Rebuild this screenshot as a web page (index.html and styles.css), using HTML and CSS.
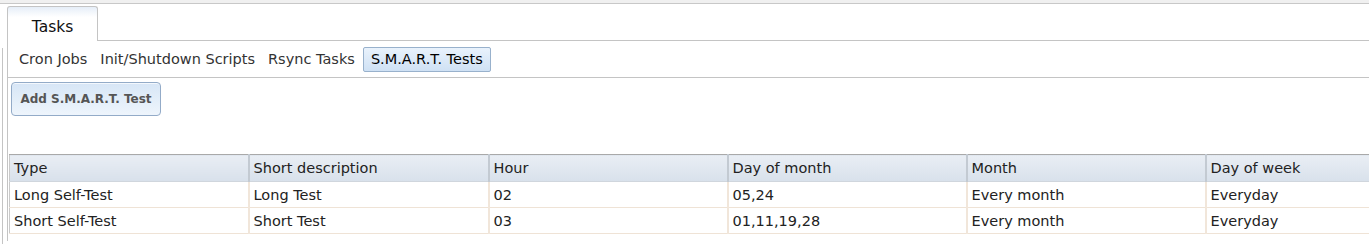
FILE: index.html
```html
<!DOCTYPE html>
<html lang="en">
<head>
    <meta charset="UTF-8">
    <title>Tasks</title>
    <link rel="stylesheet" href="styles.css">
</head>
<body>
    <div class="topbar"></div>
    <div class="frame">
        <div class="rail"></div>
        <div class="main">
            <div class="tabbar">
                <div class="tab">Tasks</div>
            </div>
            <div class="panel">
                <div class="subtabs">
                    <span class="subtab">Cron Jobs</span>
                    <span class="subtab">Init/Shutdown Scripts</span>
                    <span class="subtab">Rsync Tasks</span>
                    <span class="subtab active">S.M.A.R.T. Tests</span>
                </div>
                <div class="toolbar">
                    <button class="add-btn">Add S.M.A.R.T. Test</button>
                </div>
                <div class="grid-wrap">
                    <table class="grid">
                        <colgroup>
                            <col class="c1"><col class="c2"><col class="c3"><col class="c4"><col class="c5"><col>
                        </colgroup>
                        <thead>
                            <tr>
                                <th>Type</th>
                                <th>Short description</th>
                                <th>Hour</th>
                                <th>Day of month</th>
                                <th>Month</th>
                                <th>Day of week</th>
                            </tr>
                        </thead>
                        <tbody>
                            <tr>
                                <td>Long Self-Test</td>
                                <td>Long Test</td>
                                <td>02</td>
                                <td>05,24</td>
                                <td>Every month</td>
                                <td>Everyday</td>
                            </tr>
                            <tr>
                                <td>Short Self-Test</td>
                                <td>Short Test</td>
                                <td>03</td>
                                <td>01,11,19,28</td>
                                <td>Every month</td>
                                <td>Everyday</td>
                            </tr>
                        </tbody>
                    </table>
                </div>
            </div>
        </div>
    </div>
</body>
</html>
```

FILE: styles.css
```css
* {
    margin: 0;
    padding: 0;
    box-sizing: border-box;
}

body {
    font-family: 'DejaVu Sans', Verdana, sans-serif;
    font-size: 14.5px;
    color: #222;
    background: #fff;
    overflow: hidden;
}

.topbar {
    height: 4px;
    background: #f0f0f0;
    border-bottom: 1px solid #c8c8c8;
}

.frame {
    display: flex;
    min-height: 240px;
}

.rail {
    width: 3px;
    margin-top: 44px;
    border-right: 1px solid #c4c4c4;
    flex-shrink: 0;
}

.main {
    flex: 1;
    min-width: 0;
    margin-left: 4px;
}

.tabbar {
    padding-top: 2px;
    border-bottom: 1px solid #c4c4c4;
    display: flex;
}

.tab {
    width: 91px;
    height: 35px;
    margin-bottom: -1px;
    padding-top: 11px;
    text-align: center;
    font-size: 15.5px;
    color: #111;
    border: 1px solid #c4c4c4;
    border-bottom: none;
    border-radius: 3px 3px 0 0;
    background: linear-gradient(#e6eef8, #ffffff 30%);
}

.panel {
    border-left: 1px solid #c4c4c4;
    min-height: 200px;
}

.subtabs {
    display: flex;
    align-items: center;
    height: 37px;
    padding-left: 6px;
    border-bottom: 1px solid #c4c4c4;
}

.subtab {
    padding: 3px 4px 4px;
    margin-right: 3px;
    color: #333;
    border: 1px solid transparent;
    border-radius: 2px;
}

.subtab.active {
    padding: 3px 7px 4px;
    color: #000;
    border-color: #98b1cc;
    background: linear-gradient(#e9f2fc, #cfe1f4);
}

.toolbar {
    padding: 4px 0 0 3px;
    height: 76px;
}

.add-btn {
    width: 150px;
    height: 34px;
    font-family: 'DejaVu Sans', Verdana, sans-serif;
    font-size: 12px;
    font-weight: bold;
    color: #555;
    border: 1px solid #93abc8;
    border-radius: 4px;
    background: linear-gradient(#d7e6f6, #eef5fc);
    box-shadow: inset 0 1px 0 #f4f8fd;
}

.grid-wrap {
    margin-left: 1px;
    overflow: hidden;
}

.grid {
    table-layout: fixed;
    width: 100%;
    border-collapse: collapse;
}

.c1 { width: 239px; }
.c2 { width: 240px; }
.c3 { width: 239px; }
.c4 { width: 239px; }
.c5 { width: 239px; }

.grid th {
    height: 27px;
    padding: 0 4px;
    text-align: left;
    font-weight: normal;
    color: #222;
    background: linear-gradient(#e9eef4, #d8e1eb);
    border-top: 1px solid #a9a9a9;
    border-left: 2px solid #c3cad2;
    border-bottom: 1px solid #d0d6dd;
}

.grid td {
    height: 26px;
    padding: 0 4px;
    border-left: 2px solid #f1e6da;
    border-bottom: 1px solid #efe3d6;
    white-space: nowrap;
}

.grid th:first-child,
.grid td:first-child {
    border-left: 1px solid #c9c9c9;
}
```
